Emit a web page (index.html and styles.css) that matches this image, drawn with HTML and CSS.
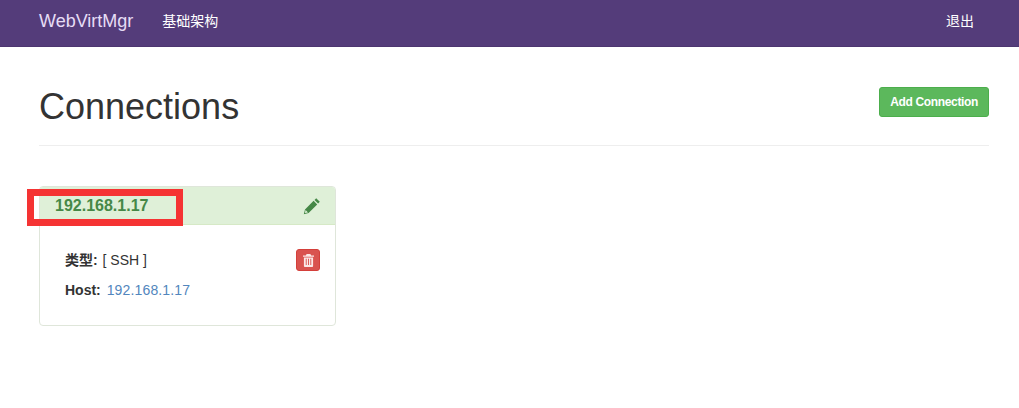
FILE: index.html
```html
<!DOCTYPE html>
<html lang="en">
<head>
    <meta charset="UTF-8">
    <title>Connections</title>
    <link rel="stylesheet" href="styles.css">
</head>
<body>
    <nav class="navbar">
        <div class="container navbar-inner">
            <a class="brand" href="#">WebVirtMgr</a>
            <a class="nav-link" href="#">基础架构</a>
            <a class="nav-link logout" href="#">退出</a>
        </div>
    </nav>
    <div class="container">
        <div class="page-header">
            <h1>Connections</h1>
            <a class="btn-add" href="#">Add Connection</a>
        </div>
        <div class="panel">
            <div class="panel-heading">
                <span class="panel-title">192.168.1.17</span>
                <a class="edit" href="#">
                    <svg width="18" height="18" viewBox="0 0 18 18">
                        <path fill="#468847" d="M13.2 1.2l3.6 3.6-1.7 1.7-3.6-3.6zM10.6 3.8l3.6 3.6-8.6 8.6-4.8 1.2 1.2-4.8zM2.6 13l-.7 3.1 3.1-.7z"/>
                    </svg>
                </a>
                <span class="mark"></span>
            </div>
            <div class="panel-body">
                <a class="btn-del" href="#">
                    <svg width="11" height="13" viewBox="0 0 12 14">
                        <path fill="#fbe9e8" fill-rule="evenodd" d="M4 0h4l1 1.500h3v1.300H0V1.500h3zM1 3.600h10V13a1 1 0 0 1-1 1H2a1 1 0 0 1-1-1zM3 5v7h1V5zM5.500 5v7h1V5zM8 5v7h1V5z"/>
                    </svg>
                </a>
                <p class="row-type"><strong>类型:</strong> [ SSH ]</p>
                <p class="row-host"><strong>Host:</strong> <a href="#">192.168.1.17</a></p>
            </div>
        </div>
    </div>
</body>
</html>
```

FILE: styles.css
```css
* {
    box-sizing: border-box;
}

body {
    margin: 0;
    font-family: "Liberation Sans", "Noto Sans CJK SC", sans-serif;
    font-size: 14px;
    line-height: 20px;
    color: #333;
    background-color: #fff;
}

a {
    text-decoration: none;
}

.container {
    width: 980px;
    margin: 0 0 0 24px;
    padding: 0 15px;
}

.navbar {
    height: 47px;
    background-color: #543c7a;
    border-bottom: 1px solid #4d3670;
}

.navbar-inner {
    display: flex;
    align-items: center;
    height: 46px;
    padding-bottom: 4px;
}

.brand {
    font-size: 18px;
    color: #e6dcf5;
    margin-right: 29px;
}

.nav-link {
    color: #fff;
}

.logout {
    margin-left: auto;
    margin-right: 15px;
}

.page-header {
    display: flex;
    justify-content: space-between;
    align-items: flex-start;
    height: 99px;
    margin-bottom: 40px;
    padding-top: 40px;
    border-bottom: 1px solid #eee;
}

h1 {
    margin: 0;
    font-size: 36px;
    font-weight: 500;
    line-height: 40px;
    color: #333;
}

.btn-add {
    height: 30px;
    padding: 0 10px;
    font-size: 12px;
    font-weight: bold;
    letter-spacing: -0.35px;
    line-height: 28px;
    color: #fff;
    background-color: #5cb85c;
    border: 1px solid #4cae4c;
    border-radius: 3px;
}

.panel {
    width: 297px;
    height: 140px;
    border: 1px solid #dfe6da;
    border-radius: 4px;
}

.panel-heading {
    position: relative;
    display: flex;
    justify-content: space-between;
    align-items: center;
    height: 38px;
    padding: 0 14px 0 15px;
    background-color: #dff0d8;
    border-bottom: 1px solid #d6e9c6;
    border-radius: 3px 3px 0 0;
}

.panel-title {
    font-size: 16px;
    font-weight: bold;
    color: #468847;
}

.edit {
    display: flex;
}

/* red box drawn over the screenshot */
.mark {
    position: absolute;
    left: -13px;
    top: 2px;
    width: 156px;
    height: 37px;
    border: 7px solid #f53333;
}

.panel-body {
    position: relative;
    padding: 25px;
}

.panel-body p {
    margin: 0 0 10px;
}

.row-type strong {
    margin-right: 1px;
}

.row-host strong {
    margin-right: 2px;
}

.row-host a {
    color: #5286bd;
    letter-spacing: 0.15px;
}

.btn-del {
    position: absolute;
    top: 24px;
    right: 15px;
    display: flex;
    align-items: center;
    justify-content: center;
    width: 24px;
    height: 22px;
    background-color: #d9534f;
    border: 1px solid #d43f3a;
    border-radius: 3px;
}
```
